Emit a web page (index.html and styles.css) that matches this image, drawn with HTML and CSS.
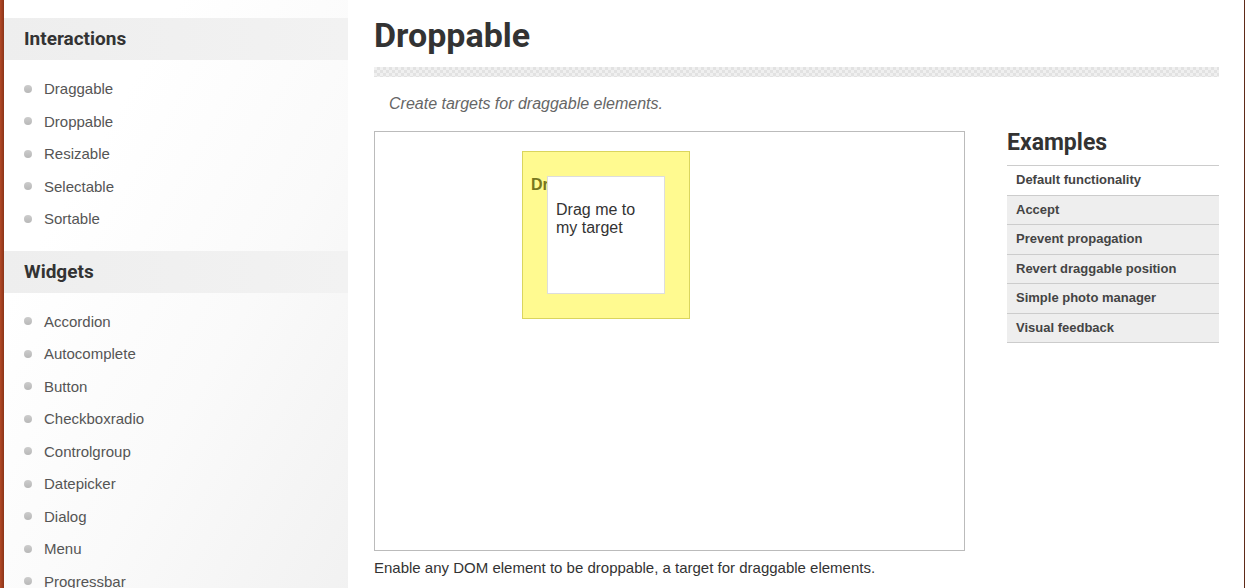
FILE: index.html
```html
<!DOCTYPE html>
<html lang="en">
<head>
<meta charset="utf-8">
<meta name="viewport" content="width=device-width, initial-scale=1">
<title>Droppable</title>
<link rel="stylesheet" href="styles.css">
</head>
<body>
<div class="page">
  <nav class="sidebar" aria-label="Sections">
    <h3 class="sidebar-title">Interactions</h3>
    <ul class="sidebar-list">
      <li><a href="#draggable">Draggable</a></li>
      <li><a href="#droppable">Droppable</a></li>
      <li><a href="#resizable">Resizable</a></li>
      <li><a href="#selectable">Selectable</a></li>
      <li><a href="#sortable">Sortable</a></li>
    </ul>
    <h3 class="sidebar-title">Widgets</h3>
    <ul class="sidebar-list">
      <li><a href="#accordion">Accordion</a></li>
      <li><a href="#autocomplete">Autocomplete</a></li>
      <li><a href="#button">Button</a></li>
      <li><a href="#checkboxradio">Checkboxradio</a></li>
      <li><a href="#controlgroup">Controlgroup</a></li>
      <li><a href="#datepicker">Datepicker</a></li>
      <li><a href="#dialog">Dialog</a></li>
      <li><a href="#menu">Menu</a></li>
      <li><a href="#progressbar">Progressbar</a></li>
    </ul>
  </nav>
  <main class="content">
    <h1 class="title">Droppable</h1>
    <hr class="rule">
    <p class="desc">Create targets for draggable elements.</p>
    <div class="columns">
      <div>
        <div class="demo">
          <div class="drop"><p>Dropped!</p></div>
          <div class="drag"><p>Drag me to my target</p></div>
        </div>
        <p class="note">Enable any DOM element to be droppable, a target for draggable elements.</p>
      </div>
      <aside class="examples">
        <h2 class="examples-title">Examples</h2>
        <ul class="examples-list">
          <li class="active"><a href="#default">Default functionality</a></li>
          <li><a href="#accept">Accept</a></li>
          <li><a href="#propagation">Prevent propagation</a></li>
          <li><a href="#revert">Revert draggable position</a></li>
          <li><a href="#photo-manager">Simple photo manager</a></li>
          <li><a href="#visual-feedback">Visual feedback</a></li>
        </ul>
      </aside>
    </div>
  </main>
</div>
</body>
</html>
```

FILE: styles.css
```css
* {
  box-sizing: border-box;
}

body {
  margin: 0;
  font-family: "Liberation Sans", Arial, sans-serif;
  color: #333;
  background: #fff;
}

h1, h2, h3, p, ul {
  margin: 0;
  padding: 0;
}

ul {
  list-style: none;
}

a {
  color: inherit;
  text-decoration: none;
}

.page {
  display: grid;
  grid-template-columns: 344px 1fr;
  height: 100vh;
  overflow: hidden;
  border-left: 4px solid;
  border-right: 1px solid #5e2a18;
  border-image: linear-gradient(to right, #b24926, #8c3418 4px, #5e2a18 5px) 0 1 0 4;
}

.sidebar {
  padding-top: 18px;
  background: linear-gradient(120deg, #fff 25%, #fafafa 60%, #f1f1f1);
}

.sidebar-title {
  padding: 0 20px;
  font: bold 19px/42px Roboto, sans-serif;
  background: linear-gradient(to right, #eee, #f2f2f2);
}

.sidebar-list {
  padding: 13px 20px 15px;
  font-size: 15px;
  line-height: 1.3;
  color: #555;
}

.sidebar-list li {
  display: flex;
  align-items: center;
  gap: 12px;
  padding: 6px 0 7px;
}

.sidebar-list li::before {
  content: "";
  width: 8px;
  height: 8px;
  border-radius: 50%;
  background: linear-gradient(#ccc, #b8b8b8);
}

.content {
  padding: 11px 25px 0 26px;
}

.title {
  font: bold 34px/48px Roboto, sans-serif;
}

.rule {
  height: 10px;
  margin: 8px 0 17px;
  border: 0;
  background: repeating-conic-gradient(#e2e2e2 0 25%, #f0f0f0 0 50%) 0 0 / 6px 6px;
}

.desc {
  padding-left: 15px;
  font-size: 16px;
  font-style: italic;
  line-height: 20px;
  color: #666;
}

.columns {
  display: grid;
  grid-template-columns: 1fr 212px;
  gap: 42px;
  margin-top: 17px;
}

.demo {
  position: relative;
  height: 420px;
  border: 1px solid #bbb;
  line-height: 18px;
}

.drop {
  position: absolute;
  left: 147px;
  top: 19px;
  width: 168px;
  height: 168px;
  padding: 24px 8px;
  border: 1px solid #dad55e;
  background: #fffa90;
  font-weight: bold;
  color: #777620;
}

.drag {
  position: absolute;
  left: 172px;
  top: 44px;
  width: 118px;
  height: 118px;
  padding: 24px 8px;
  border: 1px solid #ddd;
  background: #fff;
}

.note {
  margin-top: 7px;
  font-size: 15px;
  line-height: 20px;
}

.examples-title {
  font: bold 23px/24px Roboto, sans-serif;
}

.examples-list {
  margin-top: 10px;
  border-top: 1px solid #ccc;
  font-size: 13px;
  font-weight: bold;
  line-height: 1.5;
  color: #444;
}

.examples-list li {
  padding: 4px 9px 5px;
  border-bottom: 1px solid #ccc;
  background: #eee;
}

.examples-list .active {
  background: #fff;
}
```
